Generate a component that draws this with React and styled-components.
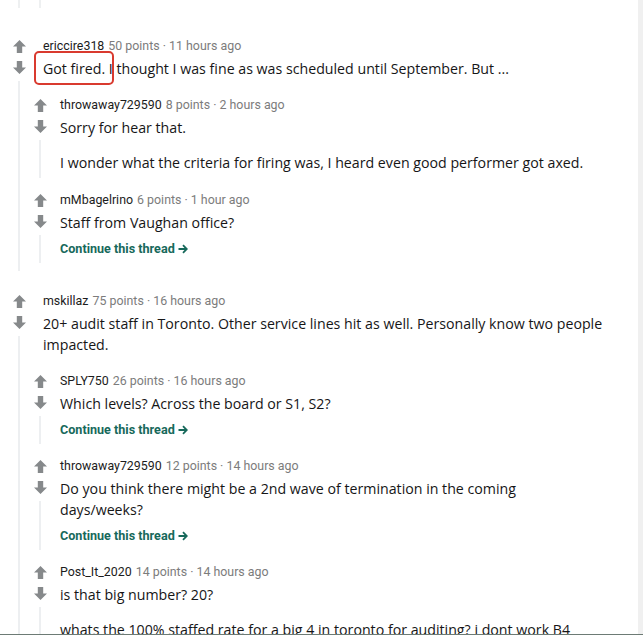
import React from 'react';
import styled, { createGlobalStyle } from 'styled-components';

const GlobalStyle = createGlobalStyle`
  html, body {
    margin: 0;
    padding: 0;
    background: #ffffff;
  }
  * {
    box-sizing: border-box;
  }
`;

const Frame = styled.div`
  width: 643px;
  height: 635px;
  display: flex;
  overflow: hidden;
  border-bottom: 1px solid #6d7b75;
  background: #ffffff;
`;

const Feed = styled.div`
  flex: 1;
  padding: 0 31px 0 10px;
  font-family: "Open Sans", "Noto Sans", sans-serif;
  color: #1c1c1c;
`;

const Scrollbar = styled.div`
  width: 5px;
  background: #f0f0f0;
`;

const Stub = styled.div`
  display: flex;
  height: 8px;
  gap: 19px;
  padding-left: 8px;
`;

const StubLine = styled.div`
  width: 2px;
  background: #eef0f1;
`;

const CommentRow = styled.div`
  display: flex;
  margin-top: ${p => p.$top}px;
`;

const Rail = styled.div`
  width: 18px;
  flex-shrink: 0;
  display: flex;
  flex-direction: column;
  align-items: center;
  padding-top: 5px;
`;

const Vote = styled.svg`
  width: 13px;
  height: 13px;
  fill: #86898b;
  margin-bottom: ${p => p.$gap || 0}px;
`;

const ThreadLine = styled.div`
  flex: 1;
  width: 2px;
  margin-top: 7px;
  background: #edeff1;
`;

const Main = styled.div`
  flex: 1;
  min-width: 0;
  margin-left: ${p => p.$gap}px;
  padding-bottom: ${p => p.$tail}px;
`;

const Meta = styled.div`
  font-family: "Roboto", "Liberation Sans", sans-serif;
  font-size: 12.4px;
  line-height: 22px;
  height: 22px;
  color: #7c7c7c;
  white-space: nowrap;
`;

const Author = styled.span`
  color: #1c1c1c;
  margin-right: 4px;
`;

const Para = styled.p`
  margin: 1px 0 0;
  font-size: 14.2px;
  line-height: 21px;
  color: #161617;
  & + & {
    margin-top: 14px;
  }
`;

const Highlight = styled.span`
  position: relative;
  &::after {
    content: '';
    position: absolute;
    top: -8px;
    bottom: -7px;
    left: -9px;
    right: -9px;
    border: 2.5px solid #d93a2f;
    border-radius: 5px;
  }
`;

const Continue = styled.a`
  display: flex;
  align-items: center;
  gap: 3px;
  margin-top: 7px;
  font-family: "Roboto", "Liberation Sans", sans-serif;
  font-weight: 700;
  font-size: 12.6px;
  line-height: 18px;
  color: #17695b;
  text-decoration: none;
`;

const ArrowIcon = styled.svg`
  width: 10px;
  height: 10px;
  stroke: #17695b;
  stroke-width: 1.8;
  fill: none;
`;

const Replies = styled.div`
  margin-left: -12px;
`;

const UpArrow = () => (
  <Vote viewBox="0 0 13 13" $gap={8}>
    <path d="M6.5 0 L13 6.6 H9.2 V13 H3.8 V6.6 H0 Z" />
  </Vote>
);

const DownArrow = () => (
  <Vote viewBox="0 0 13 13">
    <path d="M6.5 13 L13 6.4 H9.2 V0 H3.8 V6.4 H0 Z" />
  </Vote>
);

const Comment = ({ c, top, nested }) => (
  <CommentRow $top={top}>
    <Rail>
      <UpArrow />
      <DownArrow />
      <ThreadLine />
    </Rail>
    <Main $gap={nested ? 11 : 15} $tail={nested ? 5 : 8}>
      <Meta>
        <Author>{c.author}</Author>
        {c.points} points · {c.ago}
      </Meta>
      {c.body.map((b, i) => (
        <Para key={i}>{b}</Para>
      ))}
      {c.more && (
        <Continue href="#">
          Continue this thread
          <ArrowIcon viewBox="0 0 10 10">
            <path d="M0.5 5 H8.8 M5 1.2 L8.8 5 L5 8.8" />
          </ArrowIcon>
        </Continue>
      )}
      {c.replies && (
        <Replies>
          {c.replies.map((r, i) => (
            <Comment key={r.author + i} c={r} top={i === 0 ? 15 : 11} nested />
          ))}
        </Replies>
      )}
    </Main>
  </CommentRow>
);

const threads = [
  {
    author: 'ericcire318',
    points: 50,
    ago: '11 hours ago',
    body: [
      <>
        <Highlight>Got fired.</Highlight> I thought I was fine as was scheduled until September. But ...
      </>,
    ],
    replies: [
      {
        author: 'throwaway729590',
        points: 8,
        ago: '2 hours ago',
        body: [
          'Sorry for hear that.',
          'I wonder what the criteria for firing was, I heard even good performer got axed.',
        ],
      },
      {
        author: 'mMbagelrino',
        points: 6,
        ago: '1 hour ago',
        body: ['Staff from Vaughan office?'],
        more: true,
      },
    ],
  },
  {
    author: 'mskillaz',
    points: 75,
    ago: '16 hours ago',
    body: ['20+ audit staff in Toronto. Other service lines hit as well. Personally know two people impacted.'],
    replies: [
      {
        author: 'SPLY750',
        points: 26,
        ago: '16 hours ago',
        body: ['Which levels? Across the board or S1, S2?'],
        more: true,
      },
      {
        author: 'throwaway729590',
        points: 12,
        ago: '14 hours ago',
        body: [
          <>
            Do you think there might be a 2nd wave of termination in the coming
            <br />
            days/weeks?
          </>,
        ],
        more: true,
      },
      {
        author: 'Post_It_2020',
        points: 14,
        ago: '14 hours ago',
        body: [
          'is that big number? 20?',
          'whats the 100% staffed rate for a big 4 in toronto for auditing? i dont work B4',
        ],
      },
    ],
  },
];

export default function App() {
  return (
    <>
      <GlobalStyle />
      <Frame>
        <Feed>
          <Stub>
            <StubLine />
            <StubLine />
          </Stub>
          <Comment c={threads[0]} top={27} />
          <Comment c={threads[1]} top={19} />
        </Feed>
        <Scrollbar />
      </Frame>
    </>
  );
}
